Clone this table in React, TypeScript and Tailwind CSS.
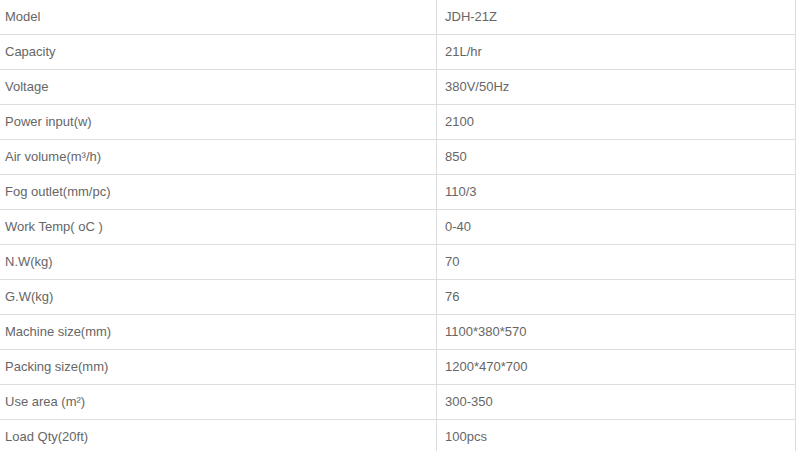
import React from "react";

const rows: [string, string][] = [
  ["Model", "JDH-21Z"],
  ["Capacity", "21L/hr"],
  ["Voltage", "380V/50Hz"],
  ["Power input(w)", "2100"],
  ["Air volume(m³/h)", "850"],
  ["Fog outlet(mm/pc)", "110/3"],
  ["Work Temp( oC )", "0-40"],
  ["N.W(kg)", "70"],
  ["G.W(kg)", "76"],
  ["Machine size(mm)", "1100*380*570"],
  ["Packing size(mm)", "1200*470*700"],
  ["Use area (m²)", "300-350"],
  ["Load Qty(20ft)", "100pcs"],
];

const App = () => {
  return (
    <div className="w-[800px] h-[451px] overflow-hidden bg-white font-['Liberation_Sans',Arial,sans-serif] text-[13px] text-[#666]">
      <div className="w-[796px] border-r border-[#ddd]">
        {rows.map(([label, value]) => (
          <div key={label} className="flex h-[35px] border-b border-[#ddd]">
            <div className="w-[437px] border-r border-[#ddd] pl-[5px] flex items-center">
              {label}
            </div>
            <div className="flex-1 pl-[8px] flex items-center">{value}</div>
          </div>
        ))}
      </div>
    </div>
  );
};

export default App;
